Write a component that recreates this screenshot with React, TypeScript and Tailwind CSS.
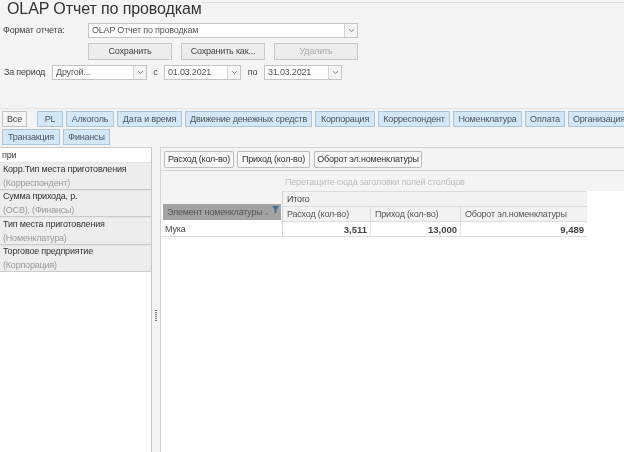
import { ChevronDown } from 'lucide-react';

const row1 = [
    { name: 'PL', w: 'w-[26px]' },
    { name: 'Алкоголь', w: 'w-[48px]' },
    { name: 'Дата и время', w: 'w-[65px]' },
    { name: 'Движение денежных средств', w: 'w-[127px]' },
    { name: 'Корпорация', w: 'w-[60px]' },
    { name: 'Корреспондент', w: 'w-[72px]' },
    { name: 'Номенклатура', w: 'w-[69px]' },
    { name: 'Оплата', w: 'w-[40px]' },
    { name: 'Организация', w: 'w-[62px]' },
];

const fields = [
    { name: 'Корр.Тип места приготовления', sub: '(Корреспондент)' },
    { name: 'Сумма прихода, р.', sub: '(ОСВ), (Финансы)' },
    { name: 'Тип места приготовления', sub: '(Номенклатура)' },
    { name: 'Торговое предприятие', sub: '(Корпорация)' },
];

function Combo({ value, className }: { value: string; className: string }) {
    return (
        <div className={`flex h-[15px] shrink-0 items-center justify-between border border-[#c4c4c4] bg-white pl-[3px] text-[#555] ${className}`}>
            <span>{value}</span>
            <span className="flex h-full w-[13px] items-center justify-center border-l border-[#d4d4d4] bg-[#f4f4f4]">
                <ChevronDown size={9} strokeWidth={2.5} className="text-[#777]" />
            </span>
        </div>
    );
}

function Button({ label, disabled }: { label: string; disabled?: boolean }) {
    return (
        <div
            className={`flex h-[17px] w-[84px] items-center justify-center border border-[#c8c8c8] bg-[#ececec] ${
                disabled ? 'text-[#aaa]' : 'text-[#444]'
            }`}
        >
            {label}
        </div>
    );
}

function Tag({ name, className }: { name: string; className: string }) {
    return (
        <div className={`flex h-[16px] shrink-0 items-center justify-center border border-[#a9c6dc] bg-[#d3e7f6] text-[#4a5560] ${className}`}>
            {name}
        </div>
    );
}

function Pill({ label, className }: { label: string; className: string }) {
    return (
        <div className={`flex h-[17px] shrink-0 items-center justify-center rounded-[2px] border border-[#bbb] bg-[#f7f7f7] text-[#333] ${className}`}>
            {label}
        </div>
    );
}

export default function App() {
    return (
        <div className="flex h-[452px] w-[624px] flex-col overflow-hidden whitespace-nowrap bg-[#f4f4f4] font-['Liberation_Sans',sans-serif] text-[9px] leading-none tracking-[-0.2px] blur-[0.3px]">
            <div className="relative h-[21px] shrink-0">
                <div className="absolute left-[202px] right-0 top-[2px] h-px bg-[#ddd]" />
                <h1 className="pl-[7px] text-[16px] leading-[17px] tracking-[-0.1px] text-[#333]">
                    OLAP Отчет по проводкам
                </h1>
            </div>

            <div className="mt-[2px] flex items-center pl-[3px]">
                <span className="w-[85px] text-[#444]">Формат отчета:</span>
                <Combo value="OLAP Отчет по проводкам" className="w-[270px]" />
            </div>

            <div className="ml-[88px] mt-[5px] flex gap-[9px]">
                <Button label="Сохранить" />
                <Button label="Сохранить как..." />
                <Button label="Удалить" disabled />
            </div>

            <div className="mt-[5px] flex items-center pl-[4px] text-[#444]">
                <span className="w-[48px]">За период</span>
                <Combo value="Другой..." className="w-[95px]" />
                <span className="w-[17px] text-center">с</span>
                <Combo value="01.03.2021" className="w-[77px]" />
                <span className="w-[23px] text-center">по</span>
                <Combo value="31.03.2021" className="w-[78px]" />
            </div>

            <div className="mt-[28px] h-[39px] shrink-0 border-t border-[#dde5ea] pl-[2px] pt-[2px]">
                <div className="flex gap-[3px]">
                    <div className="mr-[7px] flex h-[16px] w-[25px] shrink-0 items-center justify-center border border-[#c4c4c4] bg-[#f2f2f2] text-[#444]">
                        Все
                    </div>
                    {row1.map((t) => (
                        <Tag key={t.name} name={t.name} className={t.w} />
                    ))}
                </div>
                <div className="mt-[2px] flex gap-[3px]">
                    <Tag name="Транзакция" className="w-[58px]" />
                    <Tag name="Финансы" className="w-[47px]" />
                </div>
            </div>

            <div className="flex min-h-0 flex-1">
                <div className="flex w-[152px] shrink-0 flex-col border-r border-[#c8c8c8] bg-white">
                    <div className="flex h-[15px] shrink-0 items-center border-t border-[#ccc] pl-[2px] text-[#444]">при</div>
                    {fields.map((f) => (
                        <div key={f.name} className="flex h-[27.5px] shrink-0 flex-col justify-center gap-[5px] border-b border-t border-b-[#ccc] border-t-[#e4e4e4] bg-[#ededed] pl-[3px] pt-[1px]">
                            <span className="text-[#333]">{f.name}</span>
                            <span className="text-[#999]">{f.sub}</span>
                        </div>
                    ))}
                </div>

                <div className="flex w-[8px] shrink-0 items-start justify-center bg-[#f4f4f4] pt-[163px]">
                    <div className="h-[12px] w-[2px] bg-[repeating-linear-gradient(#777_0_1px,#f4f4f4_1px_2px)]" />
                </div>

                <div className="flex min-w-0 flex-1 flex-col border-l border-[#d4d4d4] bg-white">
                    <div className="flex h-[24px] shrink-0 items-center gap-[3px] border-y border-[#d4d4d4] bg-[#f4f4f4] pl-[3px]">
                        <Pill label="Расход (кол-во)" className="w-[70px]" />
                        <Pill label="Приход (кол-во)" className="mr-[1px] w-[73px]" />
                        <Pill label="Оборот эл.номенклатуры" className="w-[108px]" />
                    </div>
                    <div className="flex h-[20px] shrink-0 items-center bg-[#f4f4f4] pl-[124px] pt-[2px] text-[#bbb]">
                        Перетащите сюда заголовки полей столбцов
                    </div>
                    <div className="flex">
                        <div className="flex w-[121px] shrink-0 flex-col">
                            <div className="h-[13px] bg-[#f4f4f4]" />
                            <div className="ml-[2px] mr-[1px] flex h-[16px] items-center justify-between bg-[#a3a3a3] pl-[4px] pr-[2px] text-[#555]">
                                <span>Элемент номенклатуры</span>
                                <span className="text-[7px] text-[#888]">▴</span>
                                <svg viewBox="0 0 8 8" className="mb-[5px] h-[7px] w-[7px] fill-[#2f6f9f]">
                                    <path d="M0 0h8L5 4v4H3V4z" />
                                </svg>
                            </div>
                            <div className="mt-[2px] flex h-[15px] items-center border-b border-[#ddd] pl-[4px] pt-[1px] text-[#444]">Мука</div>
                        </div>
                        <div className="w-[305px] shrink-0 border-l border-[#d4d4d4]">
                            <div className="flex h-[16px] items-center border-b border-t border-[#dcdcdc] bg-[#f2f2f2] pl-[4px] text-[#444]">Итого</div>
                            <div className="flex h-[15px] items-center border-b border-[#dcdcdc] bg-[#f2f2f2] text-[#555]">
                                <span className="w-[88px] border-r border-[#dcdcdc] pl-[4px] leading-[14px]">Расход (кол-во)</span>
                                <span className="w-[90px] border-r border-[#dcdcdc] pl-[4px] leading-[14px]">Приход (кол-во)</span>
                                <span className="pl-[4px]">Оборот эл.номенклатуры</span>
                            </div>
                            <div className="flex h-[15px] items-center border-b border-[#ddd] text-[9.5px] font-bold tracking-normal text-[#444]">
                                <span className="w-[88px] border-r border-[#e4e4e4] pr-[3px] pt-[1px] text-right leading-[14px]">3,511</span>
                                <span className="w-[90px] border-r border-[#e4e4e4] pr-[3px] pt-[1px] text-right leading-[14px]">13,000</span>
                                <span className="flex-1 pr-[3px] pt-[1px] text-right">9,489</span>
                            </div>
                        </div>
                    </div>
                </div>
            </div>
        </div>
    );
}
